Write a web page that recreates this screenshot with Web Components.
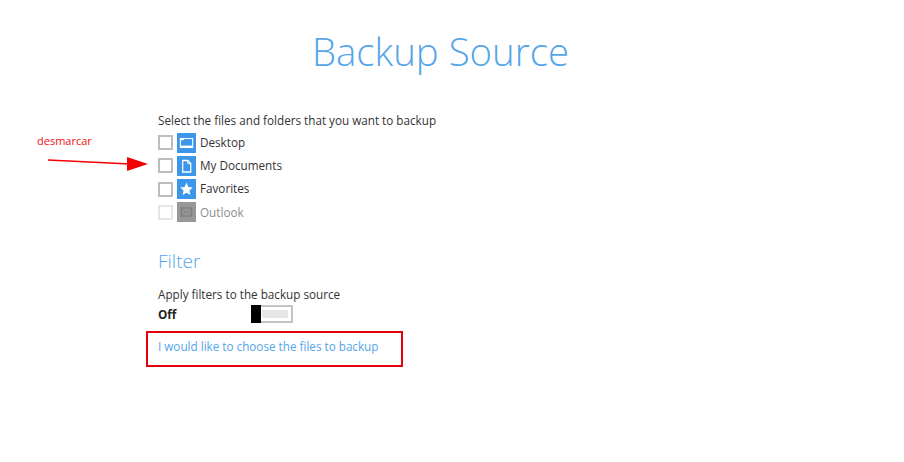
<!DOCTYPE html>
<html>
<head>
<meta charset="utf-8">
<style>
  html, body { margin: 0; padding: 0; background: #fff; }
  body { width: 904px; height: 462px; overflow: hidden; position: relative; font-family: "Open Sans", sans-serif; }
</style>
</head>
<body>
<backup-page>
  <source-row kind="desktop">Desktop</source-row>
  <source-row kind="docs">My Documents</source-row>
  <source-row kind="star">Favorites</source-row>
  <source-row kind="mail" disabled>Outlook</source-row>
</backup-page>
<script>
const ICONS = {
  desktop: '<rect x="3.5" y="5.5" width="13" height="9" fill="none" stroke="#fff" stroke-width="1.1"/><rect x="4" y="6" width="3" height="1.3" fill="#fff"/><rect x="4" y="12.6" width="12" height="1.6" fill="#fff"/>',
  docs: '<path d="M6 4.5h5.5L14.5 7.5v8.5H6z" fill="none" stroke="#fff" stroke-width="1.3"/><path d="M11.3 4.5v3.2h3.2" fill="none" stroke="#fff" stroke-width="1"/>',
  star: '<path d="M10 3.6l1.95 4.3 4.65.5-3.5 3.1 1 4.6L10 13.7l-4.1 2.4 1-4.6-3.5-3.1 4.65-.5z" fill="#fff"/>',
  mail: '<rect x="4.5" y="6" width="11" height="8" fill="none" stroke="#777" stroke-width="1"/><path d="M4.5 6.3L10 10.5l5.5-4.2M4.5 13.7l4-4M15.5 13.7l-4-4" fill="none" stroke="#777" stroke-width=".8"/>'
};

class SourceRow extends HTMLElement {
  constructor() {
    super();
    const kind = this.getAttribute('kind');
    this.attachShadow({mode: 'open'}).innerHTML = `
      <style>
        :host { display: flex; align-items: center; height: 20px; margin-bottom: 3.33px; color: #333; }
        :host([disabled]) { color: #8c8c8c; }
        .box { width: 11px; height: 11px; border: 2px solid #bdbdbd; background: #fff; margin-right: 4px; }
        :host([disabled]) .box { border-color: #e6e6e6; }
        svg { display: block; width: 19px; height: 20px; background: #3c96ea; margin-right: 4px; }
        :host([disabled]) svg { background: #979797; }
        .label { padding-bottom: 1.5px; }
      </style>
      <span class="box"></span>
      <svg viewBox="0 0 20 20" preserveAspectRatio="none">${ICONS[kind]}</svg>
      <span class="label"><slot></slot></span>
    `;
  }
}
customElements.define('source-row', SourceRow);

class FilterToggle extends HTMLElement {
  constructor() {
    super();
    this.attachShadow({mode: 'open'}).innerHTML = `
      <style>
        :host { display: flex; width: 42px; height: 18px; box-sizing: border-box; border: 2px solid #c4c4c4; border-left: 0; background: #fff; padding-right: 3px; }
        .knob { width: 10px; margin-top: -2px; margin-bottom: -2px; background: #000; }
        .track { flex: 1; margin: 3px 0 3px 1px; background: #e6e6e6; }
      </style>
      <span class="knob"></span><span class="track"></span>
    `;
  }
}
customElements.define('filter-toggle', FilterToggle);

class BackupPage extends HTMLElement {
  constructor() {
    super();
    this.attachShadow({mode: 'open'}).innerHTML = `
      <style>
        :host { display: block; height: 462px; position: relative; font-size: 11.7px; color: #333; line-height: 16px; }
        h1 { margin: 0; padding: 25px 23px 0 0; height: 52px; line-height: 52px; text-align: center; font-size: 38.4px; font-weight: 300; color: #55a5e8; }
        .content { margin: 35px 0 0 158px; width: 400px; }
        .lead { height: 16px; margin-bottom: 4.5px; }
        h2 { margin: 26px 0 0; font-size: 19px; line-height: 26px; font-weight: 300; color: #55a5e8; }
        .apply { margin-top: 12px; }
        .state { display: flex; align-items: center; height: 18px; margin-top: 3px; }
        .state b { width: 93px; font-weight: 700; color: #222; }
        .link { display: block; margin-top: 15px; color: #55a5e8; text-decoration: none; }
        .red-box { position: absolute; left: 146px; top: 331px; width: 253px; height: 32px; border: 2px solid #e8000b; }
        .note { position: absolute; left: 37px; top: 133px; color: #f01010; font-size: 11px; line-height: 15px; }
        .arrow { position: absolute; left: 46px; top: 150px; }
      </style>
      <h1>Backup Source</h1>
      <div class="content">
        <div class="lead">Select the files and folders that you want to backup</div>
        <slot></slot>
        <h2>Filter</h2>
        <div class="apply">Apply filters to the backup source</div>
        <div class="state"><b>Off</b><filter-toggle></filter-toggle></div>
        <a class="link">I would like to choose the files to backup</a>
      </div>
      <div class="red-box"></div>
      <div class="note">desmarcar</div>
      <svg class="arrow" width="106" height="26" viewBox="0 0 106 26">
        <path d="M2 10L84 14" stroke="#f50000" stroke-width="1.6" fill="none"/>
        <path d="M81 7L102 14L81 21z" fill="#f50000"/>
      </svg>
    `;
  }
}
customElements.define('backup-page', BackupPage);
</script>
</body>
</html>
